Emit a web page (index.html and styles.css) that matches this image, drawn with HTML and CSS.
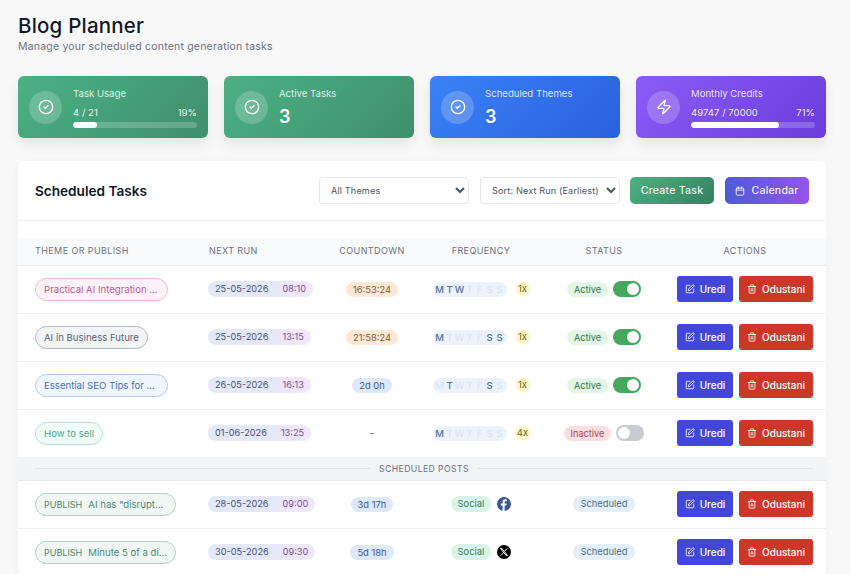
FILE: index.html
```html
<!DOCTYPE html>
<html lang="en">
<head>
<meta charset="utf-8">
<title>Blog Planner</title>
<link rel="stylesheet" href="styles.css">
</head>
<body>
<svg class="defs" width="0" height="0" aria-hidden="true">
  <symbol id="i-check" viewBox="0 0 24 24"><circle cx="12" cy="12" r="10"/><path d="m9 12 2 2 4-4"/></symbol>
  <symbol id="i-zap" viewBox="0 0 24 24"><path d="M4 14a1 1 0 0 1-.78-1.63l9.9-10.2a.5.5 0 0 1 .86.46l-1.92 6.02A1 1 0 0 0 13 10h7a1 1 0 0 1 .78 1.63l-9.9 10.2a.5.5 0 0 1-.86-.46l1.92-6.02A1 1 0 0 0 11 14z"/></symbol>
  <symbol id="i-cal" viewBox="0 0 24 24"><path d="M8 2v4"/><path d="M16 2v4"/><rect x="3" y="5" width="18" height="17" rx="2"/><path d="M3 10h18"/></symbol>
  <symbol id="i-edit" viewBox="0 0 24 24"><path d="M12 3H5a2 2 0 0 0-2 2v14a2 2 0 0 0 2 2h14a2 2 0 0 0 2-2v-7"/><path d="M18.4 2.6a2.1 2.1 0 0 1 3 3L12 15l-4 1 1-4z"/></symbol>
  <symbol id="i-trash" viewBox="0 0 24 24"><path d="M3 6h18"/><path d="M19 6v14a2 2 0 0 1-2 2H7a2 2 0 0 1-2-2V6"/><path d="M8 6V4a2 2 0 0 1 2-2h4a2 2 0 0 1 2 2v2"/><path d="M10 11v6"/><path d="M14 11v6"/></symbol>
</svg>
<main class="page">
  <header class="head">
    <h1>Blog Planner</h1>
    <p>Manage your scheduled content generation tasks</p>
  </header>

  <section class="stats">
    <div class="stat green">
      <span class="stat-ico"><svg class="ico"><use href="#i-check"/></svg></span>
      <div class="stat-body">
        <div class="stat-label">Task Usage</div>
        <div class="stat-line"><span>4 / 21</span><span>19%</span></div>
        <div class="bar"><div class="bar-fill" style="width:19%"></div></div>
      </div>
    </div>
    <div class="stat green">
      <span class="stat-ico"><svg class="ico"><use href="#i-check"/></svg></span>
      <div class="stat-body">
        <div class="stat-label">Active Tasks</div>
        <div class="stat-num">3</div>
      </div>
    </div>
    <div class="stat blue">
      <span class="stat-ico"><svg class="ico"><use href="#i-check"/></svg></span>
      <div class="stat-body">
        <div class="stat-label">Scheduled Themes</div>
        <div class="stat-num">3</div>
      </div>
    </div>
    <div class="stat purple">
      <span class="stat-ico"><svg class="ico"><use href="#i-zap"/></svg></span>
      <div class="stat-body">
        <div class="stat-label">Monthly Credits</div>
        <div class="stat-line"><span>49747 / 70000</span><span>71%</span></div>
        <div class="bar"><div class="bar-fill" style="width:71%"></div></div>
      </div>
    </div>
  </section>

  <section class="panel">
    <div class="toolbar">
      <h2>Scheduled Tasks</h2>
      <div class="tools">
        <select class="sel sel-theme"><option>All Themes</option></select>
        <select class="sel sel-sort"><option>Sort: Next Run (Earliest)</option></select>
        <button class="cta cta-green">Create Task</button>
        <button class="cta cta-violet"><svg class="ico ico-cal"><use href="#i-cal"/></svg>Calendar</button>
      </div>
    </div>
    <table class="tasks">
      <colgroup>
        <col class="c1"><col class="c2"><col class="c3"><col class="c4"><col class="c5"><col class="c6">
      </colgroup>
      <thead>
        <tr>
          <th class="left">Theme or Publish</th>
          <th class="left">Next Run</th>
          <th>Countdown</th>
          <th>Frequency</th>
          <th>Status</th>
          <th>Actions</th>
        </tr>
      </thead>
      <tbody>
        <tr>
          <td><span class="theme pink clip">Practical AI Integration ...</span></td>
          <td><span class="when"><span class="date">25-05-2026</span><span class="time">08:10</span></span></td>
          <td class="mid"><span class="cd warm">16:53:24</span></td>
          <td class="mid"><span class="freq"><span class="days"><b>M</b><b>T</b><b>W</b><i>T</i><i>F</i><i>S</i><i>S</i></span><span class="times">1x</span></span></td>
          <td class="mid"><span class="state"><span class="tag on">Active</span><span class="toggle on"></span></span></td>
          <td class="acts"><button class="act edit"><svg class="ico"><use href="#i-edit"/></svg>Uredi</button><button class="act del"><svg class="ico"><use href="#i-trash"/></svg>Odustani</button></td>
        </tr>
        <tr>
          <td><span class="theme grey">AI in Business Future</span></td>
          <td><span class="when"><span class="date">25-05-2026</span><span class="time">13:15</span></span></td>
          <td class="mid"><span class="cd warm">21:58:24</span></td>
          <td class="mid"><span class="freq"><span class="days"><b>M</b><i>T</i><i>W</i><i>T</i><i>F</i><b>S</b><b>S</b></span><span class="times">1x</span></span></td>
          <td class="mid"><span class="state"><span class="tag on">Active</span><span class="toggle on"></span></span></td>
          <td class="acts"><button class="act edit"><svg class="ico"><use href="#i-edit"/></svg>Uredi</button><button class="act del"><svg class="ico"><use href="#i-trash"/></svg>Odustani</button></td>
        </tr>
        <tr>
          <td><span class="theme sky clip">Essential SEO Tips for ...</span></td>
          <td><span class="when"><span class="date">26-05-2026</span><span class="time">16:13</span></span></td>
          <td class="mid"><span class="cd cool">2d 0h</span></td>
          <td class="mid"><span class="freq"><span class="days"><i>M</i><b>T</b><i>W</i><i>T</i><i>F</i><b>S</b><i>S</i></span><span class="times">1x</span></span></td>
          <td class="mid"><span class="state"><span class="tag on">Active</span><span class="toggle on"></span></span></td>
          <td class="acts"><button class="act edit"><svg class="ico"><use href="#i-edit"/></svg>Uredi</button><button class="act del"><svg class="ico"><use href="#i-trash"/></svg>Odustani</button></td>
        </tr>
        <tr>
          <td><span class="theme mint">How to sell</span></td>
          <td><span class="when"><span class="date">01-06-2026</span><span class="time">13:25</span></span></td>
          <td class="mid"><span class="dash">-</span></td>
          <td class="mid"><span class="freq"><span class="days"><b>M</b><i>T</i><i>W</i><i>T</i><i>F</i><i>S</i><i>S</i></span><span class="times">4x</span></span></td>
          <td class="mid"><span class="state"><span class="tag off">Inactive</span><span class="toggle"></span></span></td>
          <td class="acts"><button class="act edit"><svg class="ico"><use href="#i-edit"/></svg>Uredi</button><button class="act del"><svg class="ico"><use href="#i-trash"/></svg>Odustani</button></td>
        </tr>
        <tr class="divider">
          <td colspan="6"><div class="divider-line"><span>Scheduled Posts</span></div></td>
        </tr>
        <tr>
          <td><span class="theme post"><span class="pub">PUBLISH</span>AI has "disrupt...</span></td>
          <td><span class="when"><span class="date">28-05-2026</span><span class="time">09:00</span></span></td>
          <td class="mid"><span class="cd cool">3d 17h</span></td>
          <td class="mid"><span class="freq social"><span class="soc">Social</span><svg class="net" viewBox="0 0 14 14"><circle cx="7" cy="7" r="7" fill="#3b5998"/><path d="M7.6 14V8.4h1.7l.3-2H7.6V5.2c0-.6.2-1 1-1h1.1V2.4c-.3 0-.9-.1-1.5-.1-1.6 0-2.6 1-2.6 2.7v1.4H3.9v2h1.7V14z" fill="#fff"/></svg></span></td>
          <td class="mid"><span class="sched">Scheduled</span></td>
          <td class="acts"><button class="act edit"><svg class="ico"><use href="#i-edit"/></svg>Uredi</button><button class="act del"><svg class="ico"><use href="#i-trash"/></svg>Odustani</button></td>
        </tr>
        <tr>
          <td><span class="theme post"><span class="pub">PUBLISH</span>Minute 5 of a di...</span></td>
          <td><span class="when"><span class="date">30-05-2026</span><span class="time">09:30</span></span></td>
          <td class="mid"><span class="cd cool">5d 18h</span></td>
          <td class="mid"><span class="freq social"><span class="soc">Social</span><svg class="net" viewBox="0 0 14 14"><circle cx="7" cy="7" r="7" fill="#000"/><path d="M3.4 3.4 9.2 10.6h1.4L4.8 3.4zM10.2 3.4 7.6 6.2M6.4 7.8 3.8 10.6" fill="none" stroke="#fff" stroke-width="1"/></svg></span></td>
          <td class="mid"><span class="sched">Scheduled</span></td>
          <td class="acts"><button class="act edit"><svg class="ico"><use href="#i-edit"/></svg>Uredi</button><button class="act del"><svg class="ico"><use href="#i-trash"/></svg>Odustani</button></td>
        </tr>
      </tbody>
    </table>
  </section>
</main>
</body>
</html>
```
FILE: styles.css
```css
* { box-sizing: border-box; }
html, body { margin: 0; height: 100%; overflow: hidden; }
body {
  background: #f8f8f9;
  color: #111827;
  font-family: Inter, "Liberation Sans", sans-serif;
}
.defs { position: absolute; }
.ico {
  fill: none;
  stroke: currentColor;
  stroke-width: 2;
  stroke-linecap: round;
  stroke-linejoin: round;
}
.page { padding: 14px 24px 0 18px; }

.head h1 {
  margin: 0;
  font-size: 20.5px;
  line-height: 24px;
  font-weight: 500;
  letter-spacing: 0.2px;
  color: #111827;
}
.head p {
  margin: 1px 0 0;
  font-size: 10.5px;
  line-height: 15px;
  letter-spacing: 0.2px;
  color: #6b7280;
}

.stats {
  display: grid;
  grid-template-columns: repeat(4, 190px);
  gap: 16px;
  margin-top: 22px;
}
.stat {
  height: 62px;
  border-radius: 6px;
  padding: 0 11px;
  display: flex;
  align-items: center;
  gap: 11px;
  color: #fff;
  box-shadow: 0 6px 12px rgba(0, 0, 0, 0.08);
}
.green { background: linear-gradient(135deg, #4cb184, #3f8f6c); }
.blue { background: linear-gradient(135deg, #3b82f6, #2a60de); }
.purple { background: linear-gradient(135deg, #8b5cf6, #6a3cdc); }
.stat-ico {
  flex: none;
  width: 33px;
  height: 33px;
  border-radius: 50%;
  background: rgba(255, 255, 255, 0.2);
  display: flex;
  align-items: center;
  justify-content: center;
}
.stat-ico .ico { width: 16px; height: 16px; }
.stat-body { flex: 1; min-width: 0; }
.stat-label {
  font-size: 9.6px;
  line-height: 14px;
  color: rgba(255, 255, 255, 0.85);
}
.stat-num {
  font-size: 18px;
  line-height: 22px;
  font-weight: 600;
  margin-top: 5px;
}
.stat-line {
  display: flex;
  justify-content: space-between;
  font-size: 9.6px;
  line-height: 14px;
  margin-top: 5px;
  color: rgba(255, 255, 255, 0.92);
}
.bar {
  height: 6px;
  border-radius: 3px;
  margin-top: 2px;
  background: rgba(255, 255, 255, 0.2);
  overflow: hidden;
}
.bar-fill { height: 100%; border-radius: 3px; background: #fff; }

.panel {
  margin-top: 23px;
  background: #fff;
  border-radius: 6px;
  box-shadow: 0 2px 8px rgba(0, 0, 0, 0.04);
}
.toolbar {
  height: 60px;
  padding: 0 17px;
  display: flex;
  align-items: center;
  justify-content: space-between;
  border-bottom: 1px solid #f0f1f3;
}
.toolbar h2 {
  margin: 0;
  font-size: 13.6px;
  line-height: 20px;
  font-weight: 600;
  color: #111827;
}
.tools { display: flex; align-items: center; }
.sel {
  height: 27px;
  border: 1px solid #e5e7eb;
  border-radius: 4px;
  background: #fff;
  color: #4b5563;
  font-family: inherit;
  font-size: 9.1px;
  letter-spacing: 0.15px;
  padding: 0 0 0 7px;
  margin-right: 11px;
}
.sel-theme { width: 150px; }
.sel-sort { width: 140px; margin-right: 10px; }
.cta {
  height: 27px;
  width: 84px;
  border: 0;
  border-radius: 5px;
  color: #fff;
  font-family: inherit;
  font-size: 10.7px;
  letter-spacing: 0.2px;
  display: inline-flex;
  align-items: center;
  justify-content: center;
  padding: 0;
}
.cta-green { background: linear-gradient(135deg, #4cb184, #35815f); margin-right: 11px; }
.cta-violet { background: linear-gradient(90deg, #4f5bd5, #9555ea); }
.ico-cal { width: 10px; height: 10px; margin-right: 6px; }

.tasks {
  width: 808px;
  margin-top: 17px;
  border-collapse: collapse;
  table-layout: fixed;
}
.c1 { width: 174px; }
.c2 { width: 137px; }
.c3 { width: 86px; }
.c4 { width: 132px; }
.c5 { width: 114px; }
.c6 { width: 165px; }
.tasks th {
  height: 27px;
  padding: 0 0 2px;
  background: #f9fafb;
  border-bottom: 1px solid #e9ebee;
  font-size: 9px;
  font-weight: 400;
  letter-spacing: 0.4px;
  text-transform: uppercase;
  text-align: center;
  color: #6b7280;
}
.tasks th.left { text-align: left; padding-left: 17px; }
.tasks th:last-child { padding-left: 3px; }
.tasks td {
  height: 48px;
  padding: 0;
  border-bottom: 1px solid #f0f1f3;
  vertical-align: middle;
  font-size: 0;
  line-height: 0;
}
.tasks td:first-child { padding-left: 17px; }
.tasks td:nth-child(2) { padding-left: 16px; }
.tasks td.mid { text-align: center; }
.tasks td.acts { text-align: right; padding-right: 13px; white-space: nowrap; }

.theme {
  display: inline-block;
  height: 23px;
  line-height: 21px;
  padding: 0 8px;
  border-radius: 12px;
  border: 1px solid;
  font-size: 9.6px;
  white-space: nowrap;
  vertical-align: middle;
}
.clip { width: 133px; }
.pink { background: #fdf2f8; border-color: #f1b9d2; color: #be5b92; }
.grey { background: #f3f4f6; border-color: #b5bac2; color: #5b6472; }
.sky { background: #eff6ff; border-color: #aecbf0; color: #3f73b8; }
.mint { background: #f0fdf8; border-color: #b6e3d3; color: #4fa88c; }
.post { width: 141px; background: #f0f7f5; border-color: #b4cdc5; color: #4a8a78; }
.pub { margin-right: 6px; font-size: 9px; }

.when {
  display: inline-flex;
  height: 16px;
  line-height: 16px;
  border-radius: 8px;
  font-size: 9.2px;
  overflow: hidden;
  vertical-align: middle;
}
.date { padding: 0 7px; background: #e4e9f9; color: #4a4f7a; }
.time { padding: 0 7px; background: linear-gradient(90deg, #e9e6fa, #f4e8fb); color: #7d4e9e; }

.cd {
  display: inline-block;
  height: 15px;
  line-height: 15px;
  padding: 0 7px;
  border-radius: 8px;
  font-size: 9.4px;
  vertical-align: middle;
}
.warm { background: #fbe8d6; color: #8a5a35; }
.cool { background: #dfe8f9; color: #3e5a9a; }
.dash { font-size: 11px; line-height: 11px; color: #6b7280; vertical-align: middle; }

.freq { display: inline-flex; align-items: center; gap: 9px; vertical-align: middle; }
.days {
  display: inline-flex;
  justify-content: center;
  width: 74px;
  height: 15px;
  line-height: 15px;
  border-radius: 8px;
  background: #edf3fc;
  font-size: 9.5px;
}
.days b, .days i {
  width: 10px;
  text-align: center;
  font-style: normal;
  font-weight: 500;
}
.days b { color: #4d7199; }
.days i { color: #dbe5f2; }
.times {
  width: 14px;
  height: 14px;
  line-height: 14px;
  border-radius: 50%;
  background: #fdf6c8;
  color: #6f6320;
  font-size: 9.5px;
  font-weight: 400;
  box-shadow: 0 0 3px #fdf6c8;
}
.social { gap: 6px; }
.soc {
  height: 16px;
  line-height: 16px;
  padding: 0 7px;
  border-radius: 8px;
  background: #d8f5ea;
  color: #3c7a66;
  font-size: 9.4px;
}
.net { width: 14px; height: 14px; }

.state { display: inline-flex; align-items: center; gap: 5px; vertical-align: middle; }
.tag {
  height: 15px;
  line-height: 15px;
  padding: 0 7px;
  border-radius: 8px;
  font-size: 9.2px;
}
.tag.on { background: #e2f6e6; color: #2f7a48; }
.tag.off { background: #fadfe0; color: #a84a57; }
.toggle {
  position: relative;
  width: 28px;
  height: 16px;
  border-radius: 8px;
  background: #c9cbd1;
}
.toggle::after {
  content: "";
  position: absolute;
  top: 2px;
  left: 2px;
  width: 12px;
  height: 12px;
  border-radius: 50%;
  background: #fff;
}
.toggle.on { background: #45a85c; }
.toggle.on::after { left: 14px; }
.sched {
  display: inline-block;
  height: 16px;
  line-height: 16px;
  padding: 0 7px;
  border-radius: 8px;
  background: #e3eff9;
  color: #4f6f88;
  font-size: 9.4px;
  vertical-align: middle;
}

.act {
  height: 26px;
  border: 0;
  border-radius: 3px;
  color: #fff;
  font-family: inherit;
  font-size: 10px;
  font-weight: 500;
  padding: 0;
  display: inline-flex;
  align-items: center;
  justify-content: center;
  vertical-align: middle;
}
.act .ico { width: 10px; height: 10px; margin-right: 5px; }
.edit { width: 56px; background: #4347d9; margin-right: 6px; }
.del { width: 74px; background: #cd3727; }

.tasks .divider td {
  height: 23px;
  padding: 0 13px 0 17px;
  background: #f3f4f6;
  border-top: 1px solid #e5e7eb;
  border-bottom: 1px solid #e5e7eb;
}
.divider-line {
  display: flex;
  align-items: center;
  gap: 9px;
  font-size: 8.7px;
  line-height: 12px;
  letter-spacing: 0.4px;
  text-transform: uppercase;
  color: #6b7280;
}
.divider-line::before, .divider-line::after {
  content: "";
  flex: 1;
  height: 1px;
  background: #dfe2e6;
}
```
